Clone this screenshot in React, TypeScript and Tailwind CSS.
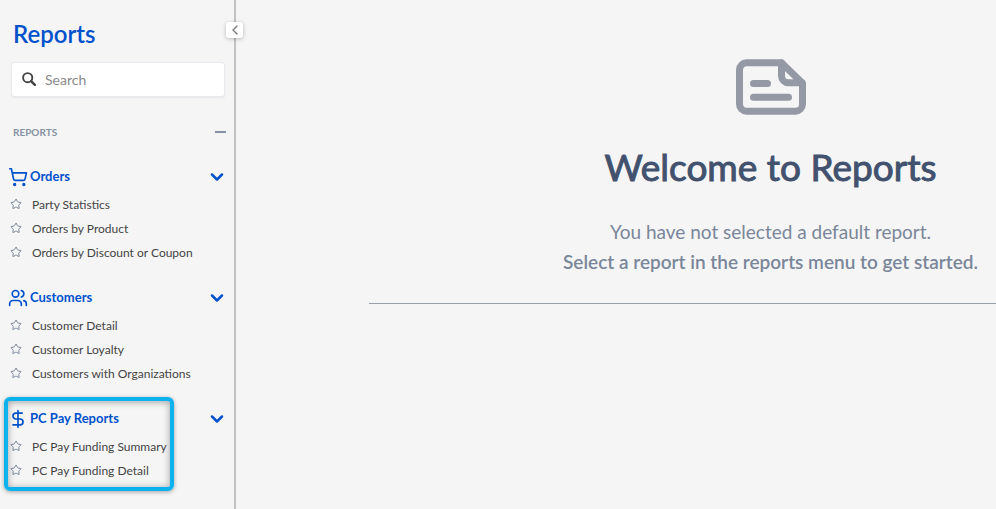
import { ChevronDown, ChevronLeft, DollarSign, ShoppingCart, Star, Users } from "lucide-react";

const GROUPS = [
  {
    title: "Orders",
    icon: ShoppingCart,
    highlighted: false,
    reports: ["Party Statistics", "Orders by Product", "Orders by Discount or Coupon"],
  },
  {
    title: "Customers",
    icon: Users,
    highlighted: false,
    reports: ["Customer Detail", "Customer Loyalty", "Customers with Organizations"],
  },
  {
    title: "PC Pay Reports",
    icon: DollarSign,
    highlighted: true,
    reports: ["PC Pay Funding Summary", "PC Pay Funding Detail"],
  },
];

function SearchIcon() {
  return (
    <svg viewBox="0 0 14 14" className="size-[14px] shrink-0" fill="none" stroke="#444" aria-hidden="true">
      <circle cx="5.7" cy="5.7" r="4.6" strokeWidth="1.9" />
      <path d="M9.2 9.2l3.6 3.6" strokeWidth="2.5" strokeLinecap="round" />
    </svg>
  );
}

function ReportIcon() {
  return (
    <svg
      viewBox="0 0 70 56"
      className="h-14 w-[70px]"
      fill="none"
      stroke="#9499a5"
      strokeWidth="7"
      strokeLinecap="round"
      strokeLinejoin="round"
      aria-hidden="true"
    >
      <path d="M45.5 3.8H10.5a7 7 0 0 0-7 7v34.4a7 7 0 0 0 7 7h49a7 7 0 0 0 7-7V24.3z" />
      <path d="M45.5 4v12.8a7 7 0 0 0 7 7H66" />
      <path d="M17.5 24.5h14M17.5 38.2h35" />
    </svg>
  );
}

function Sidebar() {
  return (
    <aside className="relative w-[236px] shrink-0 border-r-2 border-[#c2c2c4]">
      <button
        type="button"
        aria-label="Collapse menu"
        className="absolute top-[22px] -right-[9px] flex h-4 w-[17px] items-center justify-center rounded-[3px] bg-white text-[#777] shadow-[0_1px_4px_rgba(0,0,0,0.25)]"
      >
        <ChevronLeft className="size-4" strokeWidth={2} />
      </button>

      <h1 className="px-[13px] pt-[18px] text-[24px] leading-8 font-semibold text-[#0052cc]">Reports</h1>

      <div className="mt-3 mr-[9px] ml-[11px] flex h-[35px] items-center gap-[9px] rounded-[3px] border border-[#e8e9ef] bg-white px-[10px] pb-px shadow-[0_1px_2px_rgba(0,0,0,0.06)]">
        <SearchIcon />
        <input
          type="text"
          aria-label="Search"
          placeholder="Search"
          className="h-8 w-full min-w-0 bg-transparent text-[14px] outline-none placeholder:text-[#8a8a8a]"
        />
      </div>

      <div className="mt-[27px] flex h-4 items-center justify-between pr-2 pl-[13px]">
        <h2 className="text-[10px] font-bold text-[#8592a3]">REPORTS</h2>
        <button type="button" aria-label="Collapse reports" className="flex h-4 items-center">
          <span className="h-[2px] w-[11px] bg-[#8592a3]" />
        </button>
      </div>

      <nav className="mt-6 flex flex-col gap-5">
        {GROUPS.map(({ title, icon: Icon, highlighted, reports }) => (
          <section key={title} className="relative">
            <button type="button" className="flex h-[25px] w-full items-center pr-[7px] pl-2 text-[#0052cc]">
              <Icon className="size-5" strokeWidth={2} />
              <span className="ml-[2px] text-[13px] font-bold">{title}</span>
              <ChevronDown className="ml-auto size-5" strokeWidth={3} />
            </button>
            <ul className="mt-1">
              {reports.map((report) => (
                <li key={report} className="flex h-6 items-center pl-[10px]">
                  <button type="button" aria-label={`Favorite ${report}`} className="pb-[2px] text-[#7a869a]">
                    <Star className="size-3" strokeWidth={2} />
                  </button>
                  <a href="#" className="ml-[10px] text-[12px] text-[#444]">
                    {report}
                  </a>
                </li>
              ))}
            </ul>
            {highlighted && (
              <div className="pointer-events-none absolute -top-[9px] -bottom-[8px] left-[4px] w-[170px] rounded-md border-4 border-[#0cb2ee] shadow-[0_1px_4px_rgba(0,0,0,0.35),inset_0_1px_7px_rgba(0,0,0,0.35)]" />
            )}
          </section>
        ))}
      </nav>
    </aside>
  );
}

export default function App() {
  return (
    <div className="flex min-h-screen overflow-hidden bg-[#f5f5f5] font-['Lato',sans-serif]">
      <Sidebar />
      <main className="min-w-0 flex-1 pl-[133px]">
        <div className="flex min-w-[803px] flex-col items-center border-b border-[#9aa1ac] pt-[59px] pb-[26px] text-center">
          <ReportIcon />
          <h2 className="mt-7 text-[37px] leading-12 text-[#42526e] [-webkit-text-stroke:1px_#42526e]">
            Welcome to Reports
          </h2>
          <p className="mt-[26px] text-[19px] leading-[30px] text-[#7a869a]">
            You have not selected a default report.
            <br />
            <strong className="font-semibold">Select a report in the reports menu to get started.</strong>
          </p>
        </div>
      </main>
    </div>
  );
}
